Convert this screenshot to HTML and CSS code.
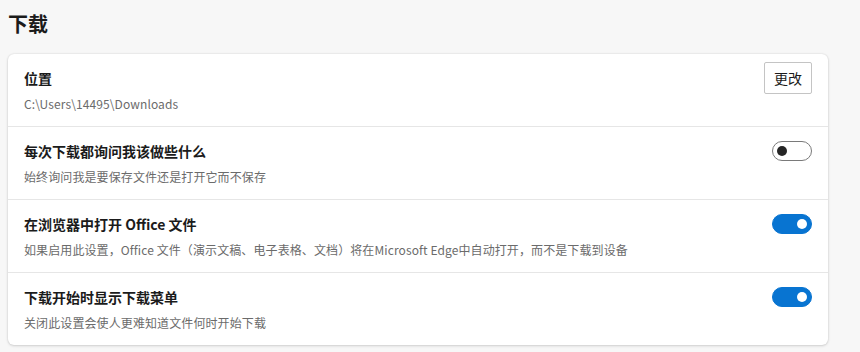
FILE: index.html
```html
<!DOCTYPE html>
<html lang="zh-CN">
<head>
<meta charset="utf-8">
<link rel="stylesheet" href="styles.css">
</head>
<body>
<div class="page">
  <h1 class="title">下载</h1>
  <div class="card">
    <div class="row">
      <div class="text">
        <div class="label">位置</div>
        <div class="desc">C:\Users\14495\Downloads</div>
      </div>
      <button class="btn">更改</button>
    </div>
    <div class="row">
      <div class="text">
        <div class="label">每次下载都询问我该做些什么</div>
        <div class="desc">始终询问我是要保存文件还是打开它而不保存</div>
      </div>
      <span class="toggle"><span class="thumb"></span></span>
    </div>
    <div class="row">
      <div class="text">
        <div class="label">在浏览器中打开 Office 文件</div>
        <div class="desc">如果启用此设置，Office 文件（演示文稿、电子表格、文档）将在Microsoft Edge中自动打开，而不是下载到设备</div>
      </div>
      <span class="toggle on"><span class="thumb"></span></span>
    </div>
    <div class="row">
      <div class="text">
        <div class="label">下载开始时显示下载菜单</div>
        <div class="desc">关闭此设置会使人更难知道文件何时开始下载</div>
      </div>
      <span class="toggle on"><span class="thumb"></span></span>
    </div>
  </div>
</div>
</body>
</html>
```
FILE: styles.css
```css
html, body {
  margin: 0;
  padding: 0;
  background: #f7f7f7;
}
body {
  font-family: "Noto Sans CJK SC", "Noto Sans", sans-serif;
  color: #1b1b1b;
}
.page {
  padding: 10px 8px 8px 8px;
}
.title {
  margin: 0 0 16px 0;
  font-size: 20px;
  line-height: 28px;
  font-weight: 700;
  color: #1b1b1b;
}
.card {
  width: 820px;
  background: #fff;
  border-radius: 6px;
  box-shadow: 0 0 2px rgba(0,0,0,0.12), 0 1px 3px rgba(0,0,0,0.14);
}
.row {
  display: flex;
  align-items: flex-start;
  padding: 14px 16px 13px 16px;
  border-bottom: 1px solid #e6e6e6;
}
.row:last-child {
  border-bottom: none;
}
.text {
  flex: 1;
}
.label {
  font-size: 14px;
  line-height: 20px;
  font-weight: 700;
  color: #1b1b1b;
}
.desc {
  margin-top: 7px;
  font-size: 12px;
  line-height: 18px;
  color: #6b6b6b;
  letter-spacing: 0.1px;
}
.btn {
  margin-top: -6px;
  width: 48px;
  height: 32px;
  background: #fff;
  border: 1px solid #c4c4c4;
  border-radius: 2px;
  font-family: inherit;
  font-size: 14px;
  color: #1b1b1b;
  padding: 0;
}
.toggle {
  position: relative;
  box-sizing: border-box;
  width: 40px;
  height: 20px;
  border: 1px solid #7a7a7a;
  border-radius: 10px;
  background: #fff;
}
.thumb {
  position: absolute;
  top: 4px;
  left: 4px;
  width: 10px;
  height: 10px;
  border-radius: 50%;
  background: #252525;
}
.toggle.on {
  background: #0874d1;
  border-color: #0874d1;
}
.toggle.on .thumb {
  left: auto;
  right: 4px;
  background: #fff;
}
```
